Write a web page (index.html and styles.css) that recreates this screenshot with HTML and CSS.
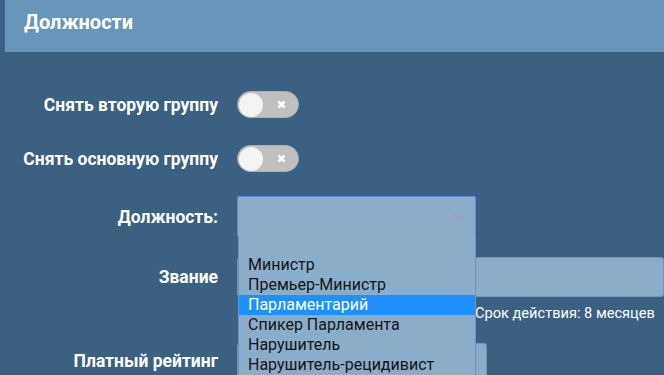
FILE: index.html
```html
<!DOCTYPE html>
<html lang="ru">
<head>
    <meta charset="UTF-8">
    <title>Должности</title>
    <link rel="stylesheet" href="styles.css">
</head>
<body>
    <div id="page">
        <div class="head">Должности</div>
        <div class="form">
            <div class="row row-toggle">
                <label class="lbl">Снять вторую группу</label>
                <span class="toggle"><i class="knob"></i><svg class="cross" width="9" height="9" viewBox="0 0 9 9"><path d="M1.5 1.5 7.5 7.5M7.5 1.5 1.5 7.5" stroke="#ffffff" stroke-width="2.6"/></svg></span>
            </div>
            <div class="row row-toggle row-second">
                <label class="lbl">Снять основную группу</label>
                <span class="toggle"><i class="knob"></i><svg class="cross" width="9" height="9" viewBox="0 0 9 9"><path d="M1.5 1.5 7.5 7.5M7.5 1.5 1.5 7.5" stroke="#ffffff" stroke-width="2.6"/></svg></span>
            </div>
            <div class="row row-select">
                <label class="lbl">Должность:</label>
                <div class="select">
                    <div class="select-box">
                        <svg class="chev" width="14" height="9" viewBox="0 0 14 9"><path d="M1.5 1.5 7 7 12.5 1.5" fill="none" stroke="#9ca3aa" stroke-width="2.2"/></svg>
                    </div>
                    <ul class="options">
                        <li class="blank">&nbsp;</li>
                        <li>Министр</li>
                        <li>Премьер-Министр</li>
                        <li class="hover">Парламентарий</li>
                        <li>Спикер Парламента</li>
                        <li>Нарушитель</li>
                        <li>Нарушитель-рецидивист</li>
                    </ul>
                </div>
            </div>
            <div class="row row-input">
                <label class="lbl">Звание</label>
                <div class="input wide"></div>
            </div>
            <div class="row row-note">
                <span class="lbl"></span>
                <span class="note">Срок действия: 8 месяцев</span>
            </div>
            <div class="row row-input row-paid">
                <label class="lbl">Платный рейтинг</label>
                <div class="input short"></div>
            </div>
        </div>
    </div>
</body>
</html>
```

FILE: styles.css
```css
*{
    margin:0;
    padding:0;
}
li{
    list-style: none;
}
html,body{
    height:100%;
}
body{
    background:#3a6182;
    font-family: Roboto, "Liberation Sans", sans-serif;
    color:#ffffff;
    overflow:hidden;
}
#page{
    padding-left:5px;
}
.head{
    height:52px;
    background:#6895ba;
    font-size:20px;
    font-weight:bold;
    line-height:44px;
    padding-left:19px;
}
.form{
    padding-top:39px;
}
.row{
    display:flex;
    align-items:center;
}
.lbl{
    width:213px;
    flex:none;
    text-align:right;
    font-size:17.5px;
    font-weight:bold;
    margin-right:19px;
    white-space:nowrap;
}
.row-toggle{
    height:27px;
}
.row-second{
    margin-top:27px;
}
.toggle{
    width:62px;
    height:27px;
    box-sizing:border-box;
    border:1px solid #b0b0b0;
    border-radius:14px;
    background:#c0c0c0;
    display:flex;
    align-items:center;
    padding-left:1px;
}
.toggle .knob{
    width:24px;
    height:24px;
    border-radius:50%;
    background:#f3f3f3;
}
.cross{
    margin-left:14px;
}
.row-select{
    margin-top:24px;
    height:41px;
}
.select{
    position:relative;
    width:239px;
    height:41px;
}
.select-box{
    height:41px;
    box-sizing:border-box;
    background:#8aadca;
    border:1px solid #5a8ddc;
    border-radius:2px;
    display:flex;
    align-items:center;
    justify-content:flex-end;
    padding-right:9px;
}
.chev{
    margin-top:2px;
}
.options{
    position:absolute;
    left:1px;
    top:40px;
    width:238px;
    box-sizing:border-box;
    background:#8aadca;
    border-left:1px solid #6c92c6;
    border-right:1px solid #6c92c6;
    color:#151515;
    font-size:16px;
    z-index:2;
}
.options li{
    height:20px;
    line-height:20px;
    padding-left:9px;
    white-space:nowrap;
}
.options .blank{
    height:19px;
}
.options .hover{
    background:#1e90ff;
    color:#ffffff;
}
.row-input{
    margin-top:20px;
    height:40px;
}
.input{
    height:40px;
    box-sizing:border-box;
    background:#8aadca;
    border:1px solid #7397b8;
    border-radius:3px;
}
.wide{
    flex:1;
}
.row-note{
    height:32px;
}
.note{
    font-size:14.6px;
    white-space:nowrap;
    margin-left:238px;
}
.row-paid{
    margin-top:14px;
    align-items:flex-start;
}
.row-paid .lbl{
    line-height:36px;
}
.short{
    width:250px;
}
```
